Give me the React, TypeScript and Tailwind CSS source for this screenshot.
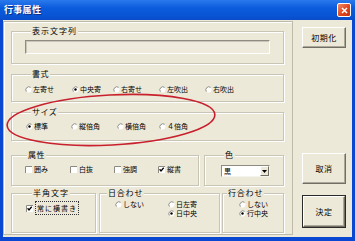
import React from "react";

const FONT = "font-['Noto_Sans_CJK_JP','Noto_Sans_CJK_SC',sans-serif]";

function Radio({ checked }: { checked?: boolean }) {
  return (
    <svg width="7" height="7" viewBox="0 0 7 7" className="shrink-0">
      <circle cx="3.5" cy="3.5" r="3" fill="#fff" />
      <path d="M5.6 1.4 A3 3 0 0 0 1.4 5.6" stroke="#8C8A80" strokeWidth="1" fill="none" />
      {checked && <circle cx="3.5" cy="3.5" r="1.2" fill="#000" />}
    </svg>
  );
}

function Check({ checked }: { checked?: boolean }) {
  return (
    <svg width="7" height="7" viewBox="0 0 7 7" className="shrink-0">
      <rect x="0" y="0" width="7" height="7" fill="#fff" />
      <path d="M0.5 7V0.5H7" stroke="#8C8A80" strokeWidth="1" fill="none" />
      {checked && <path d="M1.6 3.3 L3 4.9 L5.7 1.8" stroke="#000" strokeWidth="1.3" fill="none" />}
    </svg>
  );
}

function RadioItem({ label, checked, w }: { label: string; checked?: boolean; w: string }) {
  return (
    <div className={`flex items-center shrink-0 ${w}`}>
      <Radio checked={checked} />
      <span className="ml-[1px] text-[7px] leading-[9px] whitespace-nowrap">{label}</span>
    </div>
  );
}

function CheckItem({ label, checked, w }: { label: string; checked?: boolean; w: string }) {
  return (
    <div className={`flex items-center shrink-0 ${w}`}>
      <Check checked={checked} />
      <span className="ml-[2px] text-[7px] leading-[9px] whitespace-nowrap">{label}</span>
    </div>
  );
}

function Group({
  label,
  labelPos,
  className,
  children,
}: {
  label: string;
  labelPos: string;
  className: string;
  children?: React.ReactNode;
}) {
  return (
    <div className={`relative shrink-0 border border-[#C8C5B6] shadow-[inset_1px_1px_0_#fff,1px_1px_0_#fff] ${className}`}>
      <span
        className={`absolute -top-[6px] px-[1px] bg-[#ECE9D8] text-[8px] leading-[10px] tracking-[0.5px] text-black whitespace-nowrap ${labelPos}`}
      >
        {label}
      </span>
      {children}
    </div>
  );
}

function Btn({ label, def, className }: { label: string; def?: boolean; className: string }) {
  return (
    <div className={`shrink-0 w-[44px] ${def ? "border border-[#2a2a2a]" : ""} ${className}`}>
      <div className="w-full h-full flex items-center justify-center bg-[#ECE9D8] border border-t-white border-l-white border-b-[#716F64] border-r-[#716F64] shadow-[inset_-1px_-1px_0_#ACA899] text-[8px] leading-[10px] tracking-[0.5px]">
        {label}
      </div>
    </div>
  );
}

export default function App() {
  return (
    <div className={`relative w-[355px] h-[241px] bg-[#0A48D2] flex flex-col text-black ${FONT}`}>
      {/* title bar */}
      <div className="h-[20px] shrink-0 flex items-center justify-between pl-[4px] pr-[4px] bg-[linear-gradient(#2A79EC,#0B5CDD_40%,#0854D4_80%,#0A4BC8)]">
        <span className="text-white font-bold text-[9px] leading-[12px] tracking-[0.3px] [text-shadow:1px_1px_0_#0B2E8A]">
          行事属性
        </span>
        <div className="w-[14px] h-[14px] rounded-[2px] border border-white bg-[linear-gradient(135deg,#F08C6A,#E0441C_55%,#C53512)] flex items-center justify-center">
          <svg width="7" height="7" viewBox="0 0 7 7">
            <path d="M1 1 L6 6 M6 1 L1 6" stroke="#fff" strokeWidth="1.5" />
          </svg>
        </div>
      </div>

      {/* body */}
      <div className="flex-1 mx-[3px] mb-[4px] bg-[#ECE9D8] flex">
        {/* left panel */}
        <div className="w-[290px] h-[214px] mt-[1px] border border-[#BDBAAA] shadow-[inset_1px_1px_0_#fff] flex flex-col pl-[7px]">
          <Group label="表示文字列" labelPos="left-[19px] tracking-[1px]" className="mt-[9px] w-[273px] h-[33px] pt-[8px] pl-[13px]">
            <div className="w-[245px] h-[14px] bg-[#EEEBDD] border border-t-[#8E8C82] border-l-[#8E8C82] border-b-white border-r-white shadow-[inset_1px_1px_0_#C9C6B8]" />
          </Group>

          <Group label="書式" labelPos="left-[19px]" className="mt-[10px] w-[273px] h-[28px] pt-[10px] pl-[13px]">
            <div className="flex">
              <RadioItem label="左寄せ" w="w-[47px]" />
              <RadioItem label="中央寄" checked w="w-[41px]" />
              <RadioItem label="右寄せ" w="w-[46px]" />
              <RadioItem label="左吹出" w="w-[46px]" />
              <RadioItem label="右吹出" w="w-[46px]" />
            </div>
          </Group>

          <Group label="サイズ" labelPos="left-[19px]" className="mt-[10px] w-[273px] h-[29px] pt-[9px] pl-[14px]">
            <div className="flex">
              <RadioItem label="標準" checked w="w-[45px]" />
              <RadioItem label="縦倍角" w="w-[46px]" />
              <RadioItem label="横倍角" w="w-[42px]" />
              <RadioItem label="４倍角" w="w-[46px]" />
            </div>
          </Group>

          <div className="mt-[14px] flex gap-[5px]">
            <Group label="属性" labelPos="left-[15px]" className="w-[188px] h-[31px] pt-[9px] pl-[13px]">
              <div className="flex">
                <CheckItem label="囲み" w="w-[45px]" />
                <CheckItem label="白抜" w="w-[44px]" />
                <CheckItem label="強調" w="w-[44px]" />
                <CheckItem label="縦書" checked w="w-[40px]" />
              </div>
            </Group>
            <Group label="色" labelPos="left-[19px]" className="w-[80px] h-[31px] pt-[9px] pl-[16px]">
              <div className="w-[49px] h-[12px] bg-white border border-t-[#8E8C82] border-l-[#8E8C82] border-b-[#F4F3EE] border-r-[#F4F3EE] flex items-center">
                <span className="ml-[2px] text-[7px] leading-[9px] flex-1">黒</span>
                <div className="w-[9px] h-[10px] bg-[#ECE9D8] border border-t-white border-l-white border-b-[#716F64] border-r-[#716F64] flex items-center justify-center">
                  <svg width="5" height="3" viewBox="0 0 5 3">
                    <path d="M0 0 H5 L2.5 3 Z" fill="#000" />
                  </svg>
                </div>
              </div>
            </Group>
          </div>

          <div className="mt-[7px] flex">
            <Group label="半角文字" labelPos="left-[20px] tracking-[1px]" className="w-[85px] h-[40px] pt-[7px] pl-[14px]">
              <div className="flex items-center h-[14px]">
                <Check checked />
                <span className="ml-[2px] px-[1px] h-[14px] flex items-center border border-dotted border-[#333] text-[7px] leading-[9px] tracking-[1px] whitespace-nowrap">
                  常に横書き
                </span>
              </div>
            </Group>
            <Group label="日合わせ" labelPos="left-[7px] tracking-[0.8px]" className="ml-[3px] w-[121px] h-[40px] pt-[6px] pl-[15px]">
              <div className="flex">
                <div className="flex flex-col w-[53px]">
                  <RadioItem label="しない" w="w-[53px]" />
                </div>
                <div className="flex flex-col">
                  <RadioItem label="日左寄" w="w-[40px]" />
                  <RadioItem label="日中央" checked w="w-[40px]" />
                </div>
              </div>
            </Group>
            <Group label="行合わせ" labelPos="left-[4px] tracking-[0.8px]" className="ml-[2px] w-[62px] h-[40px] pt-[6px] pl-[16px]">
              <div className="flex flex-col">
                <RadioItem label="しない" w="w-[40px]" />
                <RadioItem label="行中央" checked w="w-[40px]" />
              </div>
            </Group>
          </div>
        </div>

        {/* right panel */}
        <div className="flex flex-col pl-[9px]">
          <Btn label="初期化" className="mt-[7px] h-[21px]" />
          <Btn label="取消" className="mt-[105px] h-[31px]" />
          <Btn label="決定" def className="mt-[11px] h-[33px]" />
        </div>
      </div>

      {/* red annotation ellipse */}
      <svg className="absolute left-0 top-0 pointer-events-none" width="355" height="241" viewBox="0 0 355 241">
        <ellipse cx="111" cy="120" rx="104" ry="25" transform="rotate(-3 111 120)" fill="none" stroke="#C8202C" strokeWidth="1.6" />
      </svg>
    </div>
  );
}
